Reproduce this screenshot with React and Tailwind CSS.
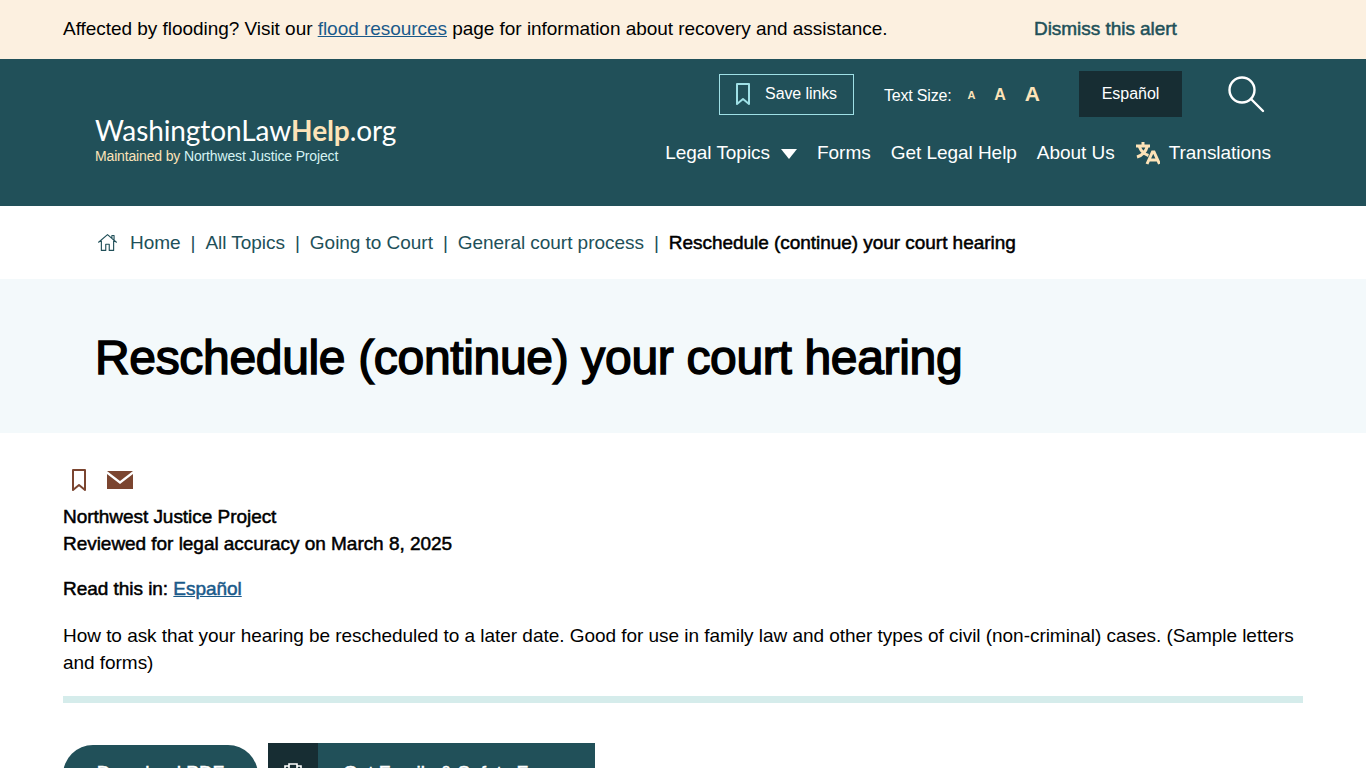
import React from "react";

const Bookmark = ({ className }) => (
  <svg viewBox="0 0 16 24" fill="none" strokeWidth="2" className={className} stroke="currentColor" strokeLinejoin="round">
    <path d="M2 2h12v20l-6-5-6 5z" />
  </svg>
);

const sep = <span className="mx-[10px] text-[#215059]">|</span>;

export default function App() {
  return (
    <div className="h-[768px] overflow-hidden bg-white text-black font-['Liberation_Sans',Arial,sans-serif] text-[19px] tracking-[-0.04px]">
      <div className="h-[59px] bg-[#fcf0e0] pl-[63px] flex items-center">
        <p className="w-[971px]">
          Affected by flooding? Visit our <a className="text-[#1a5a8a] underline">flood resources</a> page for information about recovery and assistance.
        </p>
        <a className="text-[#215059] [-webkit-text-stroke:0.5px_currentColor]">Dismiss this alert</a>
      </div>

      <header className="h-[147px] bg-[#215059] flex justify-between pl-[95px] pr-[95px]">
        <div className="pt-[53px]">
          <div className="font-['Lato',sans-serif] text-[28px] leading-[36px] tracking-[-0.1px] text-white whitespace-nowrap">
            WashingtonLaw<b className="text-[#fde3b8]">Help</b>.org
          </div>
          <div className="text-[14px] leading-[16px] tracking-[-0.15px] text-[#d5f3f3]">
            <span className="text-[#fde3b8]">Maintained by</span> Northwest Justice Project
          </div>
        </div>
        <div className="flex flex-col items-end">
          <div className="flex items-center h-[46px] mt-[12px] pr-[6px] text-white">
            <a className="flex items-center w-[135px] h-[41px] border border-[#9fe0e6] pl-[15px] text-[16px] tracking-[-0.1px]">
              <Bookmark className="w-[16px] h-[24px] text-[#9fe0e6] mr-[14px]" />
              Save links
            </a>
            <span className="ml-[30px] text-[16px] tracking-[-0.2px] mt-[3px]">Text Size:</span>
            <span className="ml-[16px] mt-[3px] text-[#fde3b8] text-[11px] font-bold">A</span>
            <span className="ml-[19px] mt-[2px] text-[#fde3b8] text-[16px] font-bold">A</span>
            <span className="ml-[19px] text-[#fde3b8] text-[21px] font-bold">A</span>
            <a className="ml-[39px] w-[103px] h-[46px] bg-[#172d33] flex items-center justify-center text-[16px]">Español</a>
            <svg viewBox="0 0 38 38" fill="none" stroke="white" strokeWidth="2.4" className="ml-[45px] w-[38px] h-[38px]">
              <circle cx="15" cy="15" r="12.5" />
              <path d="M24 24l12 12" strokeLinecap="round" />
            </svg>
          </div>
          <nav className="flex items-center mt-[22px] text-white text-[19px] leading-[28px]">
            <a>Legal Topics</a>
            <svg viewBox="0 0 16 10" className="w-[16px] h-[10px] ml-[11px] mt-[2px] fill-white"><path d="M0 0h16l-8 10z" /></svg>
            <a className="ml-[20px]">Forms</a>
            <a className="ml-[20px]">Get Legal Help</a>
            <a className="ml-[20px]">About Us</a>
            <svg viewBox="0 0 25 25" fill="none" stroke="#fde3b8" strokeWidth="3" className="ml-[20px] w-[25px] h-[25px] -mt-[1px]">
              <path d="M1 6h14M8 2v4M12.500 6C11 11 7 15.500 2 17M4.500 7c1.500 4 4.500 7 9 8.500" />
              <path d="M12 24l5.500-12h1.500l5.500 12M14 20h8.500" strokeWidth="3" />
            </svg>
            <a className="ml-[9px]">Translations</a>
          </nav>
        </div>
      </header>

      <div className="h-[73px] flex items-center pl-[97px] text-[#215059] pt-[1px]">
        <svg viewBox="0 0 24 24" fill="none" stroke="currentColor" strokeWidth="1.3" strokeLinejoin="round" className="w-[21px] h-[21px] mr-[12px] -mt-[1px]">
          <path d="M1.500 12L12 3l10.500 9M17 7.500V4h2.500v5.500M5 10v11h5v-7h4v7h5V10" />
        </svg>
        <a>Home</a>{sep}<a>All Topics</a>{sep}<a>Going to Court</a>{sep}<a>General court process</a>{sep}
        <span className="text-black [-webkit-text-stroke:0.5px_currentColor]">Reschedule (continue) your court hearing</span>
      </div>

      <div className="h-[154px] bg-[#f3f9fb] flex items-center pl-[95px]">
        <h1 className="text-[48px] font-normal leading-[56px] tracking-[-0.33px] pt-[4px] [-webkit-text-stroke:1.5px_currentColor]">Reschedule (continue) your court hearing</h1>
      </div>

      <main className="px-[63px]">
        <div className="flex items-center h-[24px] mt-[35px] pl-[8px] text-[#7b4530]">
          <Bookmark className="w-[16px] h-[24px]" />
          <svg viewBox="0 0 26 18" className="ml-[20px] w-[26px] h-[18px] fill-current">
            <path d="M0 0h26L13 10z" />
            <path d="M0 3v15h26V3L13 13z" />
          </svg>
        </div>
        <p className="leading-[27px] mt-[11px] [-webkit-text-stroke:0.5px_currentColor]">Northwest Justice Project<br />Reviewed for legal accuracy on March 8, 2025</p>
        <p className="leading-[27px] mt-[18px] [-webkit-text-stroke:0.5px_currentColor]">Read this in: <a className="text-[#1a5a8a] underline">Español</a></p>
        <p className="leading-[27px] mt-[20px]">How to ask that your hearing be rescheduled to a later date. Good for use in family law and other types of civil (non-criminal) cases. (Sample letters and forms)</p>
        <hr className="h-[7px] border-0 bg-[#d5eceb] mt-[20px]" />
        <div className="flex items-start mt-[40px]">
          <a className="mt-[2px] w-[195px] h-[60px] rounded-[30px] bg-[#215059] text-white flex items-center justify-center pb-[4px] [-webkit-text-stroke:0.5px_currentColor]">Download PDF</a>
          <a className="ml-[10px] flex h-[60px] w-[327px] bg-[#215059] text-white">
            <span className="w-[50px] bg-[#172d33] flex items-center justify-center">
              <svg viewBox="0 0 20 24" fill="none" stroke="white" strokeWidth="1.6" className="w-[20px] h-[24px] mt-[2px]">
                <path d="M6 4H2v18h16V4h-4M6 2h8v5H6zM6 12h8M6 16h8" />
              </svg>
            </span>
            <span className="pl-[25px] flex items-center [-webkit-text-stroke:0.5px_currentColor]">Get Family &amp; Safety Forms</span>
          </a>
        </div>
      </main>
    </div>
  );
}
